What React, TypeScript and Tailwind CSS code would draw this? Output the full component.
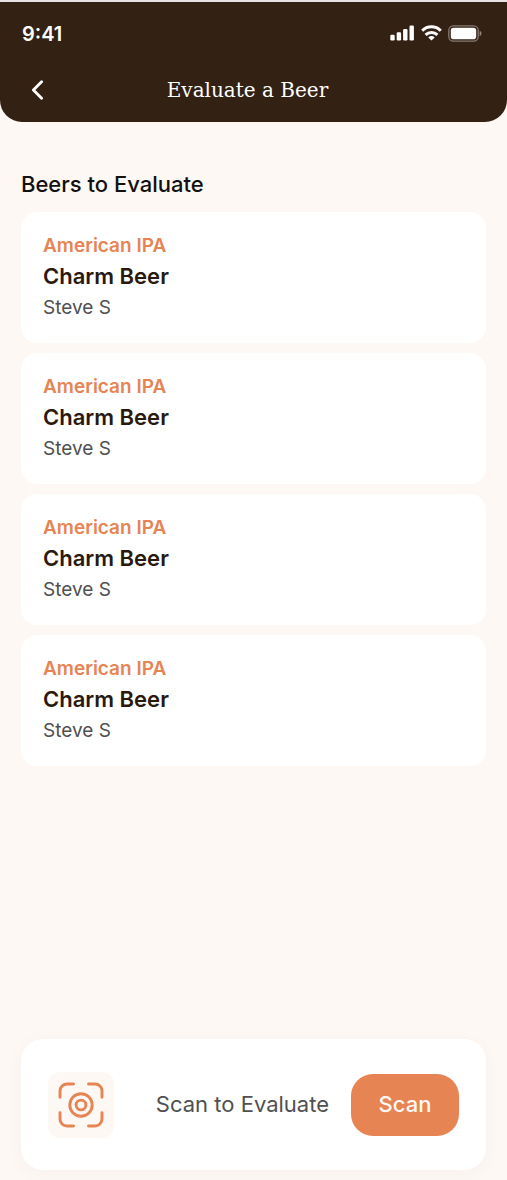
import { useState } from 'react';

type Beer = {
  id: number;
  style: string;
  name: string;
  brewer: string;
};

const initialBeers: Beer[] = [
  { id: 1, style: 'American IPA', name: 'Charm Beer', brewer: 'Steve S' },
  { id: 2, style: 'American IPA', name: 'Charm Beer', brewer: 'Steve S' },
  { id: 3, style: 'American IPA', name: 'Charm Beer', brewer: 'Steve S' },
  { id: 4, style: 'American IPA', name: 'Charm Beer', brewer: 'Steve S' },
];

function StatusBar() {
  return (
    <div className="flex items-center justify-between h-8">
      <span className="text-xl font-semibold">9:41</span>
      <div className="flex items-center gap-1.5 mr-[3px] pb-0.5" aria-hidden="true">
        <svg width="25" height="16" viewBox="0 0 25 16" fill="currentColor">
          <rect x="0.3" y="9.8" width="4.4" height="5.7" rx="1.2" />
          <rect x="6.7" y="7.2" width="4.4" height="8.3" rx="1.2" />
          <rect x="13.1" y="4" width="4.4" height="11.5" rx="1.2" />
          <rect x="19.5" y="0.5" width="4.4" height="15" rx="1.2" />
        </svg>
        <svg width="21" height="16" viewBox="0 0 21 16" fill="none" stroke="currentColor" strokeWidth="3">
          <path d="M1.2 5.7a13.2 13.2 0 0 1 18.6 0" />
          <path d="M4.6 9.9a8.4 8.4 0 0 1 11.8 0" />
          <path d="M10.5 15.6l-3.2-3.2a4.6 4.6 0 0 1 6.4 0z" fill="currentColor" stroke="none" />
        </svg>
        <svg width="34" height="17" viewBox="0 0 34 17" fill="none">
          <rect x="0.8" y="0.8" width="29.4" height="15.4" rx="4.6" stroke="currentColor" strokeOpacity="0.4" strokeWidth="1.3" />
          <rect x="2.8" y="2.8" width="25.4" height="11.4" rx="2.8" fill="currentColor" />
          <path d="M31.6 5.8c1.2.5 1.9 1.5 1.9 2.7s-.7 2.2-1.9 2.7z" fill="currentColor" fillOpacity="0.45" />
        </svg>
      </div>
    </div>
  );
}

function Header() {
  return (
    <header className="bg-[#332114] text-white rounded-b-[22px] px-[22px] pt-4 pb-4">
      <StatusBar />
      <div className="grid grid-cols-[32px_1fr_32px] items-center h-8 mt-6">
        <button type="button" aria-label="Go back" className="flex items-center pl-2 h-8">
          <svg width="16" height="20" viewBox="0 0 16 20" fill="none" stroke="currentColor" strokeWidth="2.8" strokeLinecap="round" strokeLinejoin="round">
            <path d="M11.6 1.7 3.4 10l8.2 8.3" />
          </svg>
        </button>
        <h1 className="text-center text-xl font-['DejaVu_Serif',serif] pr-3">Evaluate a Beer</h1>
      </div>
    </header>
  );
}

function BeerCard({ beer }: { beer: Beer }) {
  return (
    <li className="bg-white rounded-2xl px-[22px] py-5">
      <p className="text-[19px] leading-[28px] font-semibold text-[#e68453]">{beer.style}</p>
      <h3 className="text-[22px] leading-[32px] font-semibold text-[#2a190c]">{beer.name}</h3>
      <p className="text-[19px] leading-[31px] text-[#505050]">{beer.brewer}</p>
    </li>
  );
}

function ScanIcon() {
  return (
    <svg width="46" height="46" viewBox="0 0 46 46" fill="none" stroke="currentColor" strokeWidth="2.9" strokeLinecap="round" aria-hidden="true">
      <path d="M2 15.2V9a7 7 0 0 1 7-7h6.5" />
      <path d="M30.5 2H37a7 7 0 0 1 7 7v6.2" />
      <path d="M44 30.8V37a7 7 0 0 1-7 7h-6.5" />
      <path d="M15.5 44H9a7 7 0 0 1-7-7v-6.2" />
      <circle cx="23" cy="23" r="11.2" />
      <circle cx="23" cy="23" r="4.9" />
    </svg>
  );
}

export default function App() {
  const [beers] = useState(initialBeers);

  return (
    <div className="min-h-screen flex flex-col bg-[#fef8f4] border-t-2 border-[#eae3e5] font-[Inter,sans-serif]">
      <Header />

      <main className="flex-1 flex flex-col px-[21px] pt-[46px] pb-2.5">
        <h2 className="text-[22px] leading-[32px] font-medium text-[#111111]">Beers to Evaluate</h2>
        <ul className="flex flex-col gap-2.5 mt-3">
          {beers.map((beer) => (
            <BeerCard key={beer.id} beer={beer} />
          ))}
        </ul>

        {/* Scan bar */}
        <div className="mt-auto flex items-center justify-between bg-white rounded-[22px] shadow-[0_4px_20px_rgba(51,33,20,0.03)] h-[131px] px-[27px]">
          <div className="flex items-center justify-center size-[66px] rounded-xl bg-[#fef8f4] text-[#e68453]">
            <ScanIcon />
          </div>
          <div className="flex items-center gap-[22px]">
            <p className="text-[22px] text-[#505050]">Scan to Evaluate</p>
            <button
              type="button"
              className="w-[108px] h-[62px] rounded-[22px] bg-[#e68453] text-[22px] font-medium text-[#fef8f4]"
            >
              Scan
            </button>
          </div>
        </div>
      </main>
    </div>
  );
}
